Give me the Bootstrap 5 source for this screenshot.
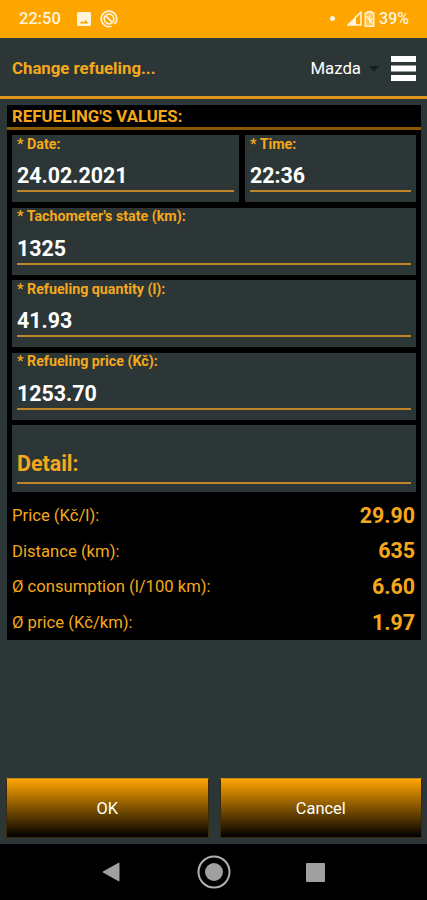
<!DOCTYPE html>
<html lang="en">
<head>
<meta charset="utf-8">
<meta name="viewport" content="width=device-width, initial-scale=1">
<title>Change refueling</title>
<link href="https://cdn.jsdelivr.net/npm/bootstrap@5.3.0/dist/css/bootstrap.min.css" rel="stylesheet">
<style>
:root{--amber:#ffa500;--ink:#f5a81c;--slate:#2c3636}
body{font-family:Roboto,sans-serif;background:var(--slate);color:#fff;line-height:1}
.screen{height:900px;width:427px;overflow:hidden}
.status{height:37.5px;background:var(--amber);color:#fff4dc;padding:0 18px 0 19px;font-size:16.5px;font-weight:500}
.status svg,.appbar svg,.sysnav svg{display:block;flex:none}
.appbar{height:61.5px;border-bottom:3px solid #dc961c;padding:4px 11px 0 12px;font-size:16.8px}
.amber{color:var(--ink)}
.panel{margin:5.5px 6px 0 7px;background:#000;height:535.5px}
.panel-title{height:25.5px;border-bottom:3px solid #8a5a00;padding:3px 0 0 5px;font-size:16.8px;font-weight:700}
.fields{padding:5px 5px 0;display:grid;grid-template-columns:227px 171px;column-gap:6px;row-gap:5.6px}
.field{background:var(--slate);height:67px;padding:1.5px 5px 0}
.field.wide{grid-column:1/-1}
.field label{display:block;font-size:14.25px;font-weight:700;color:var(--ink);height:14px}
.field .val{font-size:21.4px;font-weight:700;height:41.5px;padding-top:14.5px;border-bottom:2px solid #bd8428}
.field .det{height:57px;padding-bottom:7px}
.result{height:35.7px;padding:0 6px 0 5px;font-size:16.65px}
.result span{padding-top:1px}
.result b{font-size:21.4px;padding-bottom:1px}
.results{padding-top:5.5px}
.actions{padding:0 5px 6px 6px;gap:11px}
.btn-fade{height:60px;border:1px solid #3a2a08;border-top-color:#c98a14;border-radius:0;color:#fff;font-size:16.4px;background:linear-gradient(#ffa500,#000)}
.btn-fade span{display:block;padding-top:2px}
.sysnav{height:56px;background:#000}
#circ{margin-left:9px}
#dot{width:5px;height:5px;background:#fff4dc;margin-right:13px}
#signal{margin-left:-1px}
#batt{margin:0 4px 0 2px}
#pct{font-size:16px}
#caret{margin:0 12px 0 8px}
#home{margin:0 75px 0 77px}
</style>
</head>
<body>
<main class="screen d-flex flex-column">
<div class="status d-flex align-items-center">
<span id="clock">22:50</span>
<svg class="ms-3" width="14" height="14" viewBox="0 0 14 14"><path fill="#fff4dc" fill-rule="evenodd" d="M1.500 0h11Q14 0 14 1.500v11Q14 14 12.500 14h-11Q0 14 0 12.500v-11Q0 0 1.500 0ZM2.500 11.500h9L8.800 8 6.500 10.500 5 9Z"/></svg>
<svg id="circ" width="18" height="18" viewBox="0 0 18 18" fill="none" stroke="#fff4dc" stroke-width="1.700"><path d="M11.500 16.300A7.800 7.800 0 1 1 16.800 9Q16.800 12.500 14 14"/><circle cx="9" cy="9" r="4.800"/><path d="M5.600 5.600l7 7"/></svg>
<span class="ms-auto rounded-circle" id="dot"></span>
<svg id="signal" width="15" height="15" viewBox="0 0 15 15"><path d="M14 1v13H1Z" fill="none" stroke="#fff4dc" stroke-width="1.500"/><path d="M9 6v8H1Z" fill="#fff4dc"/></svg>
<svg id="batt" width="11" height="16" viewBox="0 0 11 16"><path d="M3.500 2V.8h4V2h2.300v13.200H1.200V2Z" fill="#ffc65e" stroke="#fff4dc" stroke-width="1.400"/><path d="M2.500 5l6 8M6.500 4L4.500 8h3l-2 4" fill="none" stroke="#fff4dc" stroke-width="1.200"/></svg>
<span id="pct">39%</span>
</div>
<header class="appbar d-flex align-items-center">
<span class="amber fw-bold" id="heading">Change refueling...</span>
<span class="ms-auto" id="car">Mazda</span>
<svg id="caret" width="10" height="6" viewBox="0 0 10 6"><path d="M0 0h10L5 6Z" fill="#172020"/></svg>
<svg width="25" height="26" viewBox="0 0 25 26" fill="#fff"><path d="M0 0h25v6H0zM0 9.500h25v6H0zM0 19h25v6H0z"/></svg>
</header>
<section class="panel">
<div class="panel-title amber"><span>REFUELING'S VALUES:</span></div>
<div class="fields">
<div class="field"><label>* Date:</label><div class="val">24.02.2021</div></div>
<div class="field"><label>* Time:</label><div class="val">22:36</div></div>
<div class="field wide"><label>* Tachometer's state (km):</label><div class="val">1325</div></div>
<div class="field wide"><label>* Refueling quantity (l):</label><div class="val">41.93</div></div>
<div class="field wide"><label>* Refueling price (Kč):</label><div class="val">1253.70</div></div>
<div class="field wide"><div class="val det amber d-flex align-items-end">Detail:</div></div>
</div>
<div class="results">
<div class="result amber d-flex align-items-center justify-content-between"><span>Price (Kč/l):</span><b>29.90</b></div>
<div class="result amber d-flex align-items-center justify-content-between"><span>Distance (km):</span><b>635</b></div>
<div class="result amber d-flex align-items-center justify-content-between"><span>Ø consumption (l/100 km):</span><b>6.60</b></div>
<div class="result amber d-flex align-items-center justify-content-between"><span>Ø price (Kč/km):</span><b>1.97</b></div>
</div>
</section>
<div class="actions d-flex mt-auto">
<button class="btn btn-fade flex-fill w-50 p-0"><span>OK</span></button>
<button class="btn btn-fade flex-fill w-50 p-0"><span>Cancel</span></button>
</div>
<nav class="sysnav d-flex align-items-center justify-content-center">
<svg width="18" height="20" viewBox="0 0 18 20"><path d="M1 10L17 1v18Z" fill="#a0a0a0" stroke="#a0a0a0" stroke-linejoin="round"/></svg>
<svg id="home" width="34" height="34" viewBox="0 0 34 34"><circle cx="17" cy="17" r="15.500" fill="none" stroke="#b0b0b0" stroke-width="2"/><circle cx="17" cy="17" r="9" fill="#a0a0a0"/></svg>
<svg width="19" height="19" viewBox="0 0 19 19"><rect width="19" height="19" rx="1" fill="#a0a0a0"/></svg>
</nav>
</main>
<script src="https://cdn.jsdelivr.net/npm/bootstrap@5.3.0/dist/js/bootstrap.bundle.min.js"></script>
</body>
</html>
